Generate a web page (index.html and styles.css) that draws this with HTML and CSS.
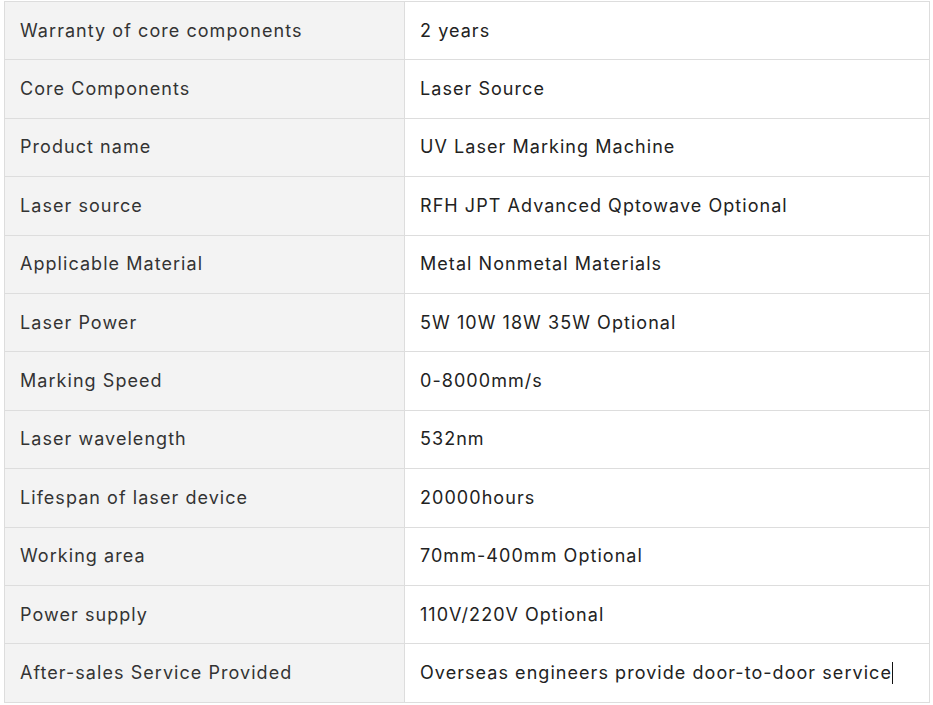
FILE: index.html
```html
<!DOCTYPE html>
<html>
<head>
<meta charset="utf-8">
<link rel="stylesheet" href="styles.css">
</head>
<body>
<div class="wrap">
<table class="spec">
<tbody>
<tr><td class="k">Warranty of core components</td><td class="v">2 years</td></tr>
<tr><td class="k">Core Components</td><td class="v">Laser Source</td></tr>
<tr><td class="k">Product name</td><td class="v">UV Laser Marking Machine</td></tr>
<tr><td class="k">Laser source</td><td class="v">RFH JPT Advanced Qptowave Optional</td></tr>
<tr><td class="k">Applicable Material</td><td class="v">Metal Nonmetal Materials</td></tr>
<tr><td class="k">Laser Power</td><td class="v">5W 10W 18W 35W Optional</td></tr>
<tr><td class="k">Marking Speed</td><td class="v">0-8000mm/s</td></tr>
<tr><td class="k">Laser wavelength</td><td class="v">532nm</td></tr>
<tr><td class="k">Lifespan of laser device</td><td class="v">20000hours</td></tr>
<tr><td class="k">Working area</td><td class="v">70mm-400mm Optional</td></tr>
<tr><td class="k">Power supply</td><td class="v">110V/220V Optional</td></tr>
<tr><td class="k">After-sales Service Provided</td><td class="v">Overseas engineers provide door-to-door service<span class="caret"></span></td></tr>
</tbody>
</table>
</div>
</body>
</html>
```
FILE: styles.css
```css
html, body {
  margin: 0;
  padding: 0;
  background: #fff;
}
.wrap {
  padding: 1px 4px 0 4px;
}
.spec {
  border-collapse: collapse;
  width: 926px;
  font-family: Inter, "Noto Sans", sans-serif;
  font-size: 18px;
  font-weight: 400;
  letter-spacing: 1.05px;
  line-height: 25px;
}
.spec td {
  border: 1px solid #dddddd;
  padding: 15.6px 15px 16.8px 15px;
  vertical-align: middle;
}
.spec .k {
  width: 369px;
  background: #f3f3f3;
  color: #333333;
}
.spec .v {
  background: #ffffff;
  color: #222222;
}
.caret {
  display: inline-block;
  width: 1px;
  height: 22px;
  margin-left: 0;
  background: #111;
  vertical-align: -5px;
}
```
